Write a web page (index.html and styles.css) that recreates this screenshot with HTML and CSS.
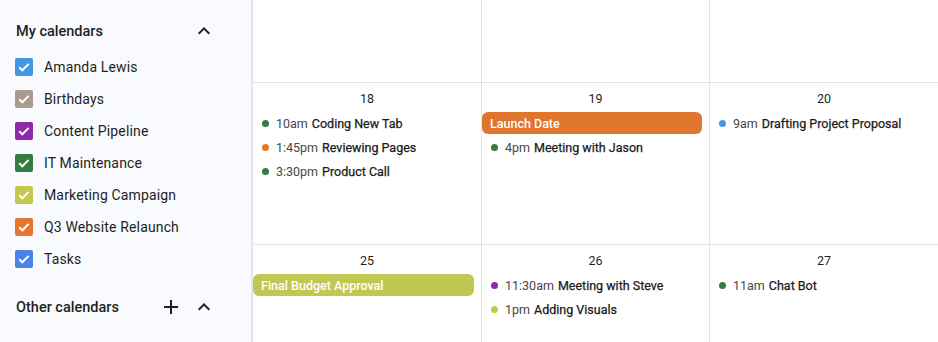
FILE: index.html
```html
<!DOCTYPE html>
<html>
<head>
<meta charset="utf-8">
<link rel="stylesheet" href="styles.css">
</head>
<body>
<div class="app">
  <aside class="sidebar">
    <div class="section-head">
      <span class="section-title">My calendars</span>
      <span class="head-icons">
        <svg class="icon" viewBox="0 0 24 24"><path d="M7.41 15.41L12 10.83l4.59 4.58L18 14l-6-6-6 6z"/></svg>
      </span>
    </div>
    <ul class="cal-list">
      <li class="cal-item"><span class="box c-blue"><svg viewBox="0 0 18 18"><path d="M4.2 9.3l3.1 3 6.4-6.4" /></svg></span>Amanda Lewis</li>
      <li class="cal-item"><span class="box c-taupe"><svg viewBox="0 0 18 18"><path d="M4.2 9.3l3.1 3 6.4-6.4" /></svg></span>Birthdays</li>
      <li class="cal-item"><span class="box c-purple"><svg viewBox="0 0 18 18"><path d="M4.2 9.3l3.1 3 6.4-6.4" /></svg></span>Content Pipeline</li>
      <li class="cal-item"><span class="box c-green"><svg viewBox="0 0 18 18"><path d="M4.2 9.3l3.1 3 6.4-6.4" /></svg></span>IT Maintenance</li>
      <li class="cal-item"><span class="box c-lime"><svg viewBox="0 0 18 18"><path d="M4.2 9.3l3.1 3 6.4-6.4" /></svg></span>Marketing Campaign</li>
      <li class="cal-item"><span class="box c-orange"><svg viewBox="0 0 18 18"><path d="M4.2 9.3l3.1 3 6.4-6.4" /></svg></span>Q3 Website Relaunch</li>
      <li class="cal-item"><span class="box c-tasks"><svg viewBox="0 0 18 18"><path d="M4.2 9.3l3.1 3 6.4-6.4" /></svg></span>Tasks</li>
    </ul>
    <div class="section-head other">
      <span class="section-title">Other calendars</span>
      <span class="head-icons">
        <svg class="icon" viewBox="0 0 24 24"><path d="M19 13h-6v6h-2v-6H5v-2h6V5h2v6h6v2z"/></svg>
        <svg class="icon" viewBox="0 0 24 24"><path d="M7.41 15.41L12 10.83l4.59 4.58L18 14l-6-6-6 6z"/></svg>
      </span>
    </div>
  </aside>
  <main class="grid">
    <div class="cell top"></div>
    <div class="cell top"></div>
    <div class="cell top"></div>

    <div class="cell">
      <div class="date">18</div>
      <div class="event"><span class="dot c-green"></span><span class="time">10am</span><span class="title">Coding New Tab</span></div>
      <div class="event"><span class="dot c-orange"></span><span class="time">1:45pm</span><span class="title">Reviewing Pages</span></div>
      <div class="event"><span class="dot c-green"></span><span class="time">3:30pm</span><span class="title">Product Call</span></div>
    </div>
    <div class="cell">
      <div class="date">19</div>
      <div class="event allday"><span class="bar b-orange">Launch Date</span></div>
      <div class="event"><span class="dot c-green"></span><span class="time">4pm</span><span class="title">Meeting with Jason</span></div>
    </div>
    <div class="cell">
      <div class="date">20</div>
      <div class="event"><span class="dot c-blue"></span><span class="time">9am</span><span class="title">Drafting Project Proposal</span></div>
    </div>

    <div class="cell">
      <div class="date">25</div>
      <div class="event allday"><span class="bar b-lime">Final Budget Approval</span></div>
    </div>
    <div class="cell">
      <div class="date">26</div>
      <div class="event"><span class="dot c-purple"></span><span class="time">11:30am</span><span class="title">Meeting with Steve</span></div>
      <div class="event"><span class="dot c-lime"></span><span class="time">1pm</span><span class="title">Adding Visuals</span></div>
    </div>
    <div class="cell">
      <div class="date">27</div>
      <div class="event"><span class="dot c-green"></span><span class="time">11am</span><span class="title">Chat Bot</span></div>
    </div>
  </main>
</div>
</body>
</html>
```

FILE: styles.css
```css
* { box-sizing: border-box; }
html, body { margin: 0; padding: 0; }
body {
  font-family: Roboto, "Liberation Sans", sans-serif;
  color: #1f1f1f;
  background: #ffffff;
  width: 938px;
  height: 342px;
  overflow: hidden;
}
.app {
  display: flex;
  height: 342px;
}
.sidebar {
  width: 252px;
  flex: none;
  background: #f8fafd;
  border-right: 1px solid #e3e6ea;
  padding-top: 15px;
}
.section-head {
  display: flex;
  align-items: center;
  justify-content: space-between;
  height: 32px;
  padding-left: 16px;
  padding-right: 35px;
}
.section-head.other {
  margin-top: 16px;
}
.section-title {
  font-size: 14.5px;
  font-weight: 500;
  color: #1f1f1f;
}
.head-icons {
  display: flex;
  align-items: center;
  gap: 9px;
}
.icon {
  width: 24px;
  height: 24px;
  fill: #1f1f1f;
}
.cal-list {
  list-style: none;
  margin: 4px 0 0;
  padding: 0;
}
.cal-item {
  display: flex;
  align-items: center;
  height: 32px;
  padding-left: 15px;
  font-size: 14px;
  color: #1f1f1f;
  letter-spacing: 0.15px;
}
.box {
  width: 18px;
  height: 18px;
  border-radius: 2px;
  margin-right: 11px;
  display: flex;
}
.box svg {
  width: 18px;
  height: 18px;
  fill: none;
  stroke: #ffffff;
  stroke-width: 2;
}
.c-blue { background: #4596e1; }
.c-taupe { background: #a89c90; }
.c-purple { background: #8e2aa8; }
.c-green { background: #367b43; }
.c-lime { background: #c3ca4a; }
.c-orange { background: #e2772e; }
.c-tasks { background: #4a82e8; }

.grid {
  flex: 1;
  display: grid;
  grid-template-columns: 229px 228px 1fr;
  grid-template-rows: 82px 162px 1fr;
}
.cell {
  border-left: 1px solid #e0e3e7;
  border-top: 1px solid #e0e3e7;
  padding-top: 6px;
  min-width: 0;
}
.cell.top { border-top: none; }
.date {
  text-align: center;
  font-size: 12.5px;
  font-weight: 400;
  line-height: 20px;
  color: #1f1f1f;
  margin-bottom: 2px;
}
.event {
  display: flex;
  align-items: center;
  height: 24px;
  padding-left: 9px;
  font-size: 12.5px;
  white-space: nowrap;
}
.dot {
  width: 7px;
  height: 7px;
  border-radius: 50%;
  margin-right: 7px;
  flex: none;
}
.time {
  color: #444746;
  margin-right: 4px;
}
.title {
  color: #1a1a1a;
  font-weight: 400;
  -webkit-text-stroke: 0.25px #1a1a1a;
}
.event.allday {
  padding-left: 0;
  padding-right: 7px;
}
.bar {
  display: flex;
  align-items: center;
  width: 100%;
  height: 22px;
  border-radius: 6px;
  padding-left: 8px;
  color: #ffffff;
  font-weight: 500;
  font-size: 12.5px;
}
.b-orange { background: #e0762e; }
.b-lime { background: #c1c852; }
```
